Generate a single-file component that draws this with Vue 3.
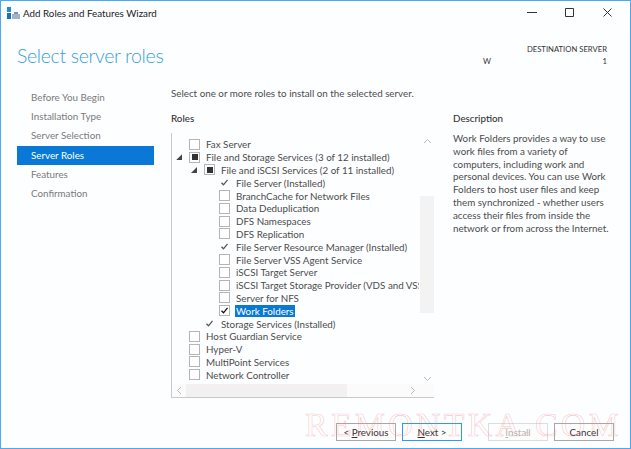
<script setup>
const steps = [
  { label: 'Before You Begin' },
  { label: 'Installation Type' },
  { label: 'Server Selection' },
  { label: 'Server Roles', active: true },
  { label: 'Features' },
  { label: 'Confirmation' }
]
const roles = [
  { label: 'Fax Server', level: 0, box: 'empty' },
  { label: 'File and Storage Services (3 of 12 installed)', level: 0, box: 'partial', arrow: true },
  { label: 'File and iSCSI Services (2 of 11 installed)', level: 1, box: 'partial', arrow: true },
  { label: 'File Server (Installed)', level: 2, box: 'installed' },
  { label: 'BranchCache for Network Files', level: 2, box: 'empty' },
  { label: 'Data Deduplication', level: 2, box: 'empty' },
  { label: 'DFS Namespaces', level: 2, box: 'empty' },
  { label: 'DFS Replication', level: 2, box: 'empty' },
  { label: 'File Server Resource Manager (Installed)', level: 2, box: 'installed' },
  { label: 'File Server VSS Agent Service', level: 2, box: 'empty' },
  { label: 'iSCSI Target Server', level: 2, box: 'empty' },
  { label: 'iSCSI Target Storage Provider (VDS and VSS hardware providers)', level: 2, box: 'empty' },
  { label: 'Server for NFS', level: 2, box: 'empty' },
  { label: 'Work Folders', level: 2, box: 'checked', selected: true },
  { label: 'Storage Services (Installed)', level: 1, box: 'installed' },
  { label: 'Host Guardian Service', level: 0, box: 'empty' },
  { label: 'Hyper-V', level: 0, box: 'empty' },
  { label: 'MultiPoint Services', level: 0, box: 'empty' },
  { label: 'Network Controller', level: 0, box: 'empty' }
]
const descLines = [
  'Work Folders provides a way to use',
  'work files from a variety of',
  'computers, including work and',
  'personal devices. You can use Work',
  'Folders to host user files and keep',
  'them synchronized - whether users',
  'access their files from inside the',
  'network or from across the Internet.'
]
</script>

<template>
  <div class="window">
    <header class="titlebar">
      <svg class="app-icon" width="13" height="12" viewBox="0 0 13 12">
        <rect x="0" y="0" width="4" height="5" fill="#1c8be0" />
        <rect x="0" y="6" width="4" height="6" fill="#1c6fb8" />
        <rect x="5" y="7" width="8" height="5" fill="#9fb4c6" />
        <rect x="7" y="5" width="4" height="2" fill="#7d93a8" />
      </svg>
      <span class="title">Add Roles and Features Wizard</span>
      <div class="controls">
        <svg width="12" height="12" viewBox="0 0 12 12"><path d="M1 5.5h10" stroke="#333" fill="none" /></svg>
        <svg width="12" height="12" viewBox="0 0 12 12"><path d="M1.5 1.5h8v8h-8z" stroke="#333" fill="none" /></svg>
        <svg width="12" height="12" viewBox="0 0 12 12"><path d="M1.5 1.5l8 8M9.5 1.5l-8 8" stroke="#333" fill="none" /></svg>
      </div>
    </header>

    <div class="heading">
      <h1>Select server roles</h1>
      <div class="dest">
        <div>DESTINATION SERVER</div>
        <div class="dest-name"><span>W</span><span>1</span></div>
      </div>
    </div>

    <div class="body">
      <nav class="steps">
        <div v-for="s in steps" :key="s.label" class="step" :class="{ active: s.active }">{{ s.label }}</div>
      </nav>
      <main class="main">
        <p class="intro">Select one or more roles to install on the selected server.</p>
        <div class="columns">
          <section class="roles">
            <h2>Roles</h2>
            <div class="listbox">
              <div class="tree">
                <div v-for="r in roles" :key="r.label" class="row" :class="'lvl' + r.level">
                  <span class="arrow" :class="{ on: r.arrow }"></span>
                  <span class="box" :class="r.box">
                    <svg v-if="r.box === 'installed' || r.box === 'checked'" width="11" height="11" viewBox="0 0 11 11">
                      <path d="M2.5 5.8l2 2 4-5" fill="none" :stroke="r.box === 'checked' ? '#111' : '#555'" stroke-width="1.3" />
                    </svg>
                  </span>
                  <span class="label" :class="{ sel: r.selected }">{{ r.label }}</span>
                </div>
              </div>
              <div class="vbar">
                <svg width="9" height="6" viewBox="0 0 9 6"><path d="M1 5l3.5-3.5L8 5" fill="none" stroke="#bbb" /></svg>
                <div class="vtrack"><div class="vthumb"></div></div>
                <svg width="9" height="6" viewBox="0 0 9 6"><path d="M1 1l3.5 3.5L8 1" fill="none" stroke="#bbb" /></svg>
              </div>
              <div class="hbar">
                <svg width="6" height="9" viewBox="0 0 6 9"><path d="M5 1L1.5 4.5 5 8" fill="none" stroke="#bbb" /></svg>
                <div class="htrack"><div class="hthumb"></div></div>
                <svg width="6" height="9" viewBox="0 0 6 9"><path d="M1 1l3.5 3.5L1 8" fill="none" stroke="#bbb" /></svg>
              </div>
            </div>
          </section>
          <aside class="desc">
            <h2>Description</h2>
            <p><span v-for="l in descLines" :key="l" class="dline">{{ l }}</span></p>
          </aside>
        </div>
      </main>
    </div>

    <footer class="footer">
      <button class="btn">&lt; <u>P</u>revious</button>
      <button class="btn primary"><u>N</u>ext &gt;</button>
      <button class="btn disabled install"><u>I</u>nstall</button>
      <button class="btn">Cancel</button>
    </footer>

    <div class="watermark">REMONTKA.COM</div>
  </div>
</template>

<style>
html, body { margin: 0; padding: 0; background: #fff; }
</style>

<style scoped>
.window {
  position: relative;
  box-sizing: border-box;
  width: 631px;
  height: 449px;
  border: 1px solid #4aa9f2;
  background: #fdfeff;
  overflow: hidden;
  font-family: "Lato", "Noto Sans", sans-serif;
  font-size: 9.8px;
  color: #4c4c4c;
  display: flex;
  flex-direction: column;
}
.titlebar {
  display: flex;
  align-items: center;
  height: 23px;
  padding: 0 0 0 6px;
  flex: none;
}
.app-icon { margin-right: 3px; }
.title { color: #222; }
.controls {
  margin-left: auto;
  display: flex;
  gap: 26px;
  padding-right: 16px;
}
.heading {
  display: flex;
  justify-content: space-between;
  height: 59px;
  flex: none;
}
h1 {
  margin: 19px 0 0 16px;
  font-size: 19.5px;
  letter-spacing: -0.35px;
  font-weight: 300;
  color: #3aa0d8;
  line-height: 26px;
}
.dest {
  width: 124px;
  margin: 19px 23px 0 0;
  font-size: 7.7px;
  text-align: right;
  line-height: 12px;
  color: #333;
}
.dest-name { display: flex; justify-content: space-between; }
.body { display: flex; flex: 1; min-height: 0; }
.steps { width: 137px; margin: 5px 0 0 16px; flex: none; }
.step { height: 19.2px; line-height: 19.2px; padding-left: 14px; color: #7a7a7a; }
.step.active { background: #0a78d6; color: #fff; }
.main { margin-left: 17px; flex: 1; }
.intro { margin: 3px 0 0; line-height: 14px; }
.columns { display: flex; margin-top: 11px; }
h2 { margin: 0; font-size: 9.8px; font-weight: 500; color: #333; line-height: 14px; }
.roles { width: 263px; flex: none; }
.listbox {
  position: relative;
  margin-top: 8px;
  height: 265px;
  box-sizing: border-box;
  border-left: 1px solid #c9c9c9;
  border-bottom: 1px solid #c9c9c9;
  padding-top: 5px;
  overflow: hidden;
}
.tree { width: 247px; height: 243px; overflow: hidden; }
.row { display: flex; align-items: center; height: 12.8px; white-space: nowrap; }
.row.lvl0 { padding-left: 4px; }
.row.lvl1 { padding-left: 19px; }
.row.lvl2 { padding-left: 34px; }
.arrow { width: 13px; flex: none; height: 6px; }
.arrow.on {
  width: 6px;
  margin-right: 7px;
  background: #444;
  clip-path: polygon(100% 0, 100% 100%, 0 100%);
}
.box {
  width: 9px;
  height: 9px;
  flex: none;
  border: 1px solid #b5b5b5;
  margin-right: 5px;
  display: flex;
  align-items: center;
  justify-content: center;
  background: #fff;
}
.box.installed { border-color: transparent; background: none; }
.box.partial::after { content: ""; width: 6px; height: 6px; background: #333; flex: none; }
.box svg { flex: none; }
.label { padding: 0 1px; line-height: 12px; }
.label.sel { background: #0a78d6; color: #fff; }
.vbar {
  position: absolute;
  right: 0;
  top: 0;
  bottom: 13px;
  width: 14px;
  display: flex;
  flex-direction: column;
  align-items: center;
  padding: 5px 0 2px;
  box-sizing: border-box;
}
.vtrack { flex: 1; width: 100%; position: relative; }
.vthumb { position: absolute; left: 0; right: 0; top: 52px; height: 117px; background: #f3f3f3; }
.hbar {
  position: absolute;
  left: 0;
  right: 0;
  bottom: 0;
  height: 13px;
  display: flex;
  align-items: center;
  padding: 0 18px 0 4px;
  background: #fbfbfb;
}
.htrack { flex: 1; height: 100%; position: relative; }
.hthumb { position: absolute; left: 4px; width: 161px; top: 0; bottom: 0; background: #f2f0f0; }
.desc { margin-left: 19px; width: 165px; }
.desc p { margin: 7px 0 0; line-height: 12.8px; }
.dline { display: block; white-space: nowrap; }
.footer {
  flex: none;
  display: flex;
  justify-content: flex-end;
  gap: 6px;
  padding: 0 16px 7px 0;
}
.btn {
  width: 60px;
  height: 18px;
  padding: 0;
  box-sizing: border-box;
  border: 1px solid #a8a8a8;
  background: #fdfdfd;
  font: inherit;
  color: #333;
  line-height: 14px;
}
.btn.primary { border-color: #2a9bf0; }
.btn.disabled { border-color: #ddd; color: #b5b5b5; }
.btn.install { margin-left: 20px; }
.watermark {
  position: absolute;
  left: 304px;
  top: 405px;
  font-family: "Liberation Serif", serif;
  font-size: 34px;
  letter-spacing: 3.2px;
  white-space: nowrap;
  color: transparent;
  -webkit-text-stroke: 0.6px rgba(235, 120, 120, 0.4);
  pointer-events: none;
}
</style>
